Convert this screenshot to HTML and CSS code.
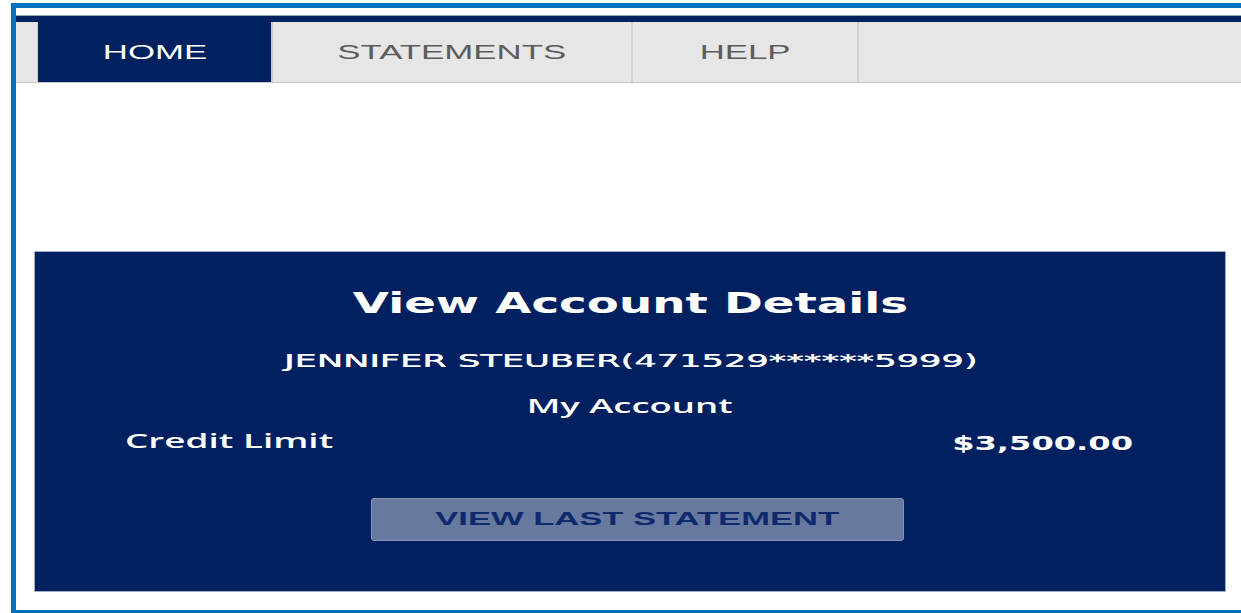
FILE: index.html
```html
<!DOCTYPE html>
<html lang="en">
<head>
<meta charset="utf-8">
<title>Home</title>
<link rel="stylesheet" href="styles.css">
</head>
<body>
<div class="frame">
  <div class="topstrip"></div>
  <nav class="tabs">
    <div class="tab-lead"></div>
    <a class="tab tab-home is-active" href="#"><span class="wide wide-tab">HOME</span></a>
    <a class="tab tab-statements" href="#"><span class="wide wide-tab">STATEMENTS</span></a>
    <a class="tab tab-help" href="#"><span class="wide wide-tab">HELP</span></a>
    <div class="tab-rest"></div>
  </nav>
  <main class="content">
    <section class="card">
      <h1 class="card-title"><span class="wide wide-title">View Account Details</span></h1>
      <p class="card-name"><span class="wide wide-name">JENNIFER STEUBER(471529******5999)</span></p>
      <p class="card-sub"><span class="wide wide-sub">My Account</span></p>
      <div class="card-row">
        <span class="wide wide-label">Credit Limit</span>
        <span class="wide wide-amount">$3,500.00</span>
      </div>
      <div class="card-actions">
        <button class="btn" type="button"><span class="wide wide-btn">VIEW LAST STATEMENT</span></button>
      </div>
    </section>
  </main>
</div>
</body>
</html>
```

FILE: styles.css
```css
html, body {
  margin: 0;
  padding: 0;
  background: #ffffff;
  overflow: hidden;
}

body {
  width: 1241px;
  height: 613px;
}

.frame {
  margin: 3px 0 0 11px;
  width: 1260px;
  height: 610px;
  border-top: 5px solid #0070c0;
  border-left: 5px solid #0070c0;
  border-bottom: 3px solid #0070c0;
  box-sizing: border-box;
  padding-top: 7px;
  background: #ffffff;
  display: flex;
  flex-direction: column;
}

.topstrip {
  height: 7px;
  background: #00215f;
  border-top: 1px solid #9aa3b8;
  box-sizing: border-box;
}

/* stretched text: the whole UI is drawn wide */
.wide {
  display: inline-block;
  white-space: nowrap;
  transform-origin: center center;
}

.tabs {
  display: flex;
  height: 61px;
  background: #e6e6e6;
  border-bottom: 1px solid #c9c9c9;
  box-sizing: border-box;
}

.tab-lead {
  width: 21px;
  border-right: 1px solid #cfcfcf;
}

.tab {
  display: flex;
  align-items: center;
  justify-content: center;
  text-decoration: none;
  color: #5c5c5c;
  font-family: "Liberation Sans", Arial, sans-serif;
  font-size: 20px;
  border-right: 2px solid #d2d2d2;
  box-sizing: border-box;
}

.tab.is-active {
  background: #00215f;
  color: #ffffff;
  border-right-color: #c9c9c9;
}

.tab-home { width: 235px; }
.tab-statements { width: 360px; }
.tab-help { width: 226px; }
.tab-rest { flex: 1; }

.wide-tab { transform: scaleX(1.74); }

.content {
  flex: 1;
  padding: 168px 0 0 18px;
}

.card {
  width: 1192px;
  height: 341px;
  box-sizing: border-box;
  background: #00205f;
  border: 1px solid #a6adc2;
  color: #ffffff;
  padding: 32px 92px 0 92px;
  display: flex;
  flex-direction: column;
}

.card-title {
  margin: 0;
  height: 40px;
  line-height: 40px;
  text-align: center;
  font-family: "DejaVu Sans", Verdana, sans-serif;
  font-weight: bold;
  font-size: 27px;
}

.wide-title { transform: scaleX(1.73) scaleY(1.04); }

.card-name {
  margin: 25px 0 0;
  height: 24px;
  line-height: 24px;
  text-align: center;
  font-family: "DejaVu Sans", Verdana, sans-serif;
  font-size: 17px;
  text-shadow: 0.4px 0 0 #ffffff;
}

.wide-name { transform: scaleX(2.07); }

.card-sub {
  margin: 21px 0 0;
  height: 24px;
  line-height: 24px;
  text-align: center;
  font-family: "Open Sans", sans-serif;
  font-weight: 600;
  font-size: 19px;
}

.wide-sub { transform: scaleX(1.92); }

.card-row {
  margin-top: 10px;
  height: 26px;
  display: flex;
  justify-content: space-between;
  align-items: center;
}

.wide-label {
  font-family: "Open Sans", sans-serif;
  font-weight: 600;
  font-size: 19px;
  margin-left: -2px;
  transform-origin: left center;
  transform: scaleX(1.94);
}

.wide-amount {
  font-family: "DejaVu Sans", Verdana, sans-serif;
  font-weight: bold;
  font-size: 19px;
  margin-top: 3px;
  transform-origin: right center;
  transform: scaleX(1.69);
}

.card-actions {
  margin-top: 44px;
  display: flex;
  justify-content: center;
  padding-left: 14px;
}

.btn {
  width: 533px;
  height: 43px;
  border: 1px solid #8593b4;
  border-radius: 3px;
  background: #68799f;
  color: #0f2a6c;
  font-family: "Liberation Sans", Arial, sans-serif;
  font-weight: bold;
  font-size: 18px;
  padding: 0;
  cursor: pointer;
}

.wide-btn { transform: scaleX(1.92); }
```
